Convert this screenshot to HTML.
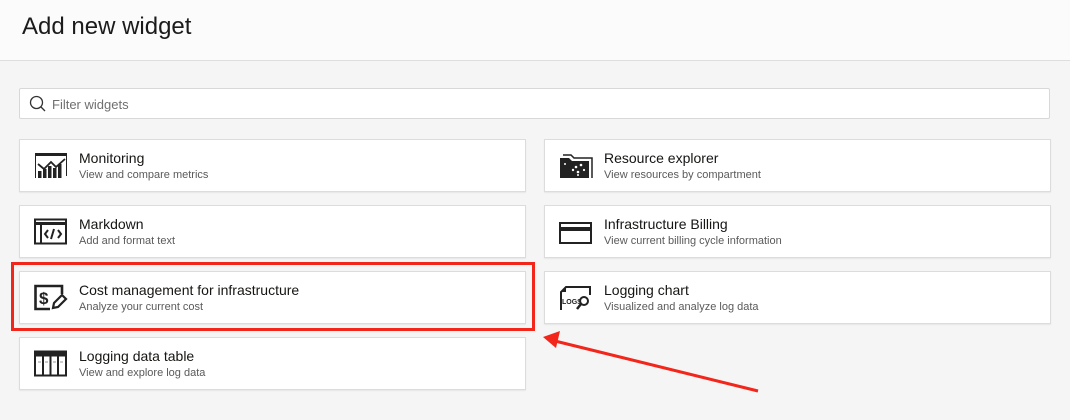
<!DOCTYPE html>
<html><head><meta charset="utf-8"><style>
*{margin:0;padding:0;box-sizing:border-box}
body{width:1070px;height:420px;background:#f5f5f5;font-family:"Liberation Sans",Arial,sans-serif;position:relative;overflow:hidden;color:#161513}
.hdr{position:absolute;left:0;top:0;width:1070px;height:61px;background:#fbfbfb;border-bottom:1px solid #dedede}
.hdr h1{position:absolute;left:22px;top:13px;font-size:24px;font-weight:normal;color:#1b1b1b}
.search{position:absolute;left:19px;top:88px;width:1031px;height:31px;background:#fff;border:1px solid #d8d8d8;border-radius:2px}
.search span{position:absolute;left:32px;top:8px;font-size:13px;color:#6f6f6f}
.card{position:absolute;width:507px;height:53px;background:#fff;border:1px solid #dcdcdc;box-shadow:0 1px 1px rgba(0,0,0,.06)}
.card .t{position:absolute;left:59px;top:10px;font-size:14px;color:#161513}
.card .s{position:absolute;left:59px;top:29px;font-size:11px;color:#5a5a5a}
.card svg{position:absolute;left:14px;top:12px}
.L{left:19px}.R{left:544px}
</style></head><body>
<div class="hdr"><h1>Add new widget</h1></div>
<div class="search">
<svg width="18" height="18" style="position:absolute;left:9px;top:6px" viewBox="0 0 18 18"><circle cx="7.5" cy="7.5" r="6" fill="none" stroke="#333" stroke-width="1.3"/><line x1="12" y1="12" x2="16" y2="16" stroke="#333" stroke-width="1.3"/></svg>
<span>Filter widgets</span></div>

<div class="card L" style="top:139px"><svg width="34" height="28" viewBox="0 0 34 28"><rect x="1" y="1" width="32" height="3" fill="#222"/><path d="M1.5 4v22M32.5 4v20" stroke="#222" stroke-width="1"/><path d="M4 12l6 5 7-7 5 5 9-8" fill="none" stroke="#222" stroke-width="1.8"/><rect x="4" y="19" width="3.5" height="7" fill="#222"/><rect x="9" y="17" width="3.5" height="9" fill="#222"/><rect x="14" y="14" width="3.5" height="12" fill="#222"/><rect x="19" y="16" width="3.5" height="10" fill="#222"/><rect x="24" y="12" width="3.5" height="14" fill="#222"/></svg><div class="t">Monitoring</div><div class="s">View and compare metrics</div></div>

<div class="card L" style="top:205px"><svg width="34" height="28" viewBox="0 0 34 28"><rect x="1" y="1.5" width="31" height="24" fill="none" stroke="#222" stroke-width="2"/><rect x="1" y="4" width="31" height="3" fill="#222"/><line x1="7" y1="6" x2="7" y2="25" stroke="#222" stroke-width="2"/><path d="M14 12l-3 4 3 4M24 12l3 4-3 4M20 11l-3 10" fill="none" stroke="#222" stroke-width="2"/></svg><div class="t">Markdown</div><div class="s">Add and format text</div></div>

<div class="card L" style="top:271px"><svg width="34" height="28" viewBox="0 0 34 28"><path d="M28 10V2H1.5v23H16" fill="none" stroke="#222" stroke-width="2.6"/><text x="5" y="20" font-size="17" font-weight="bold" font-family="Liberation Sans" fill="#222">$</text><path d="M19 24l1-5 8-8 4 4-8 8z" fill="none" stroke="#222" stroke-width="2.2"/></svg><div class="t">Cost management for infrastructure</div><div class="s">Analyze your current cost</div></div>

<div class="card L" style="top:337px"><svg width="34" height="28" viewBox="0 0 34 28"><rect x="1" y="1.5" width="31" height="24" fill="none" stroke="#222" stroke-width="2"/><rect x="1" y="1.5" width="31" height="5" fill="#222"/><path d="M9 2v24M16.5 2v24M24 2v24" stroke="#222" stroke-width="2"/><path d="M4 12h3M11 12h3M19 12h3M26 12h3" stroke="#999" stroke-width="1"/></svg><div class="t">Logging data table</div><div class="s">View and explore log data</div></div>

<div class="card R" style="top:139px"><svg width="34" height="28" viewBox="0 0 34 28"><path d="M4 3h8l3 3h18v20" fill="none" stroke="#222" stroke-width="1.5"/><path d="M1 6h9l3 3h17v17H1z" fill="#222"/><circle cx="6" cy="12" r="1" fill="#fff"/><circle cx="17" cy="15" r="1.3" fill="#fff"/><circle cx="22" cy="13" r="1.3" fill="#fff"/><circle cx="14" cy="18" r="1.2" fill="#fff"/><circle cx="19" cy="20" r="1.3" fill="#fff"/><circle cx="25" cy="18" r="1.1" fill="#fff"/><circle cx="19" cy="23" r="1" fill="#fff"/></svg><div class="t">Resource explorer</div><div class="s">View resources by compartment</div></div>

<div class="card R" style="top:205px"><svg width="34" height="28" viewBox="0 0 34 28"><rect x="1" y="5" width="31" height="20" fill="none" stroke="#222" stroke-width="2"/><rect x="1" y="9" width="31" height="4" fill="#222"/></svg><div class="t">Infrastructure Billing</div><div class="s">View current billing cycle information</div></div>

<div class="card R" style="top:271px"><svg width="34" height="28" viewBox="0 0 34 28"><path d="M2 26V8l5-5h24v8" fill="none" stroke="#222" stroke-width="2"/><path d="M2 8h5V3" fill="#222"/><text x="3" y="20" font-size="7" font-weight="bold" font-family="Liberation Sans" fill="#222">LOGS</text><circle cx="25" cy="17" r="4" fill="none" stroke="#222" stroke-width="2"/><line x1="22" y1="20" x2="18" y2="25" stroke="#222" stroke-width="2.5"/></svg><div class="t">Logging chart</div><div class="s">Visualized and analyze log data</div></div>

<div style="position:absolute;left:11px;top:262px;width:524px;height:69px;border:3px solid #f2261b"></div>
<svg width="1070" height="420" style="position:absolute;left:0;top:0"><line x1="758" y1="391" x2="555" y2="341" stroke="#f2261b" stroke-width="3"/><polygon points="543,337 560,331 556,348" fill="#f2261b"/></svg>
</body></html>
